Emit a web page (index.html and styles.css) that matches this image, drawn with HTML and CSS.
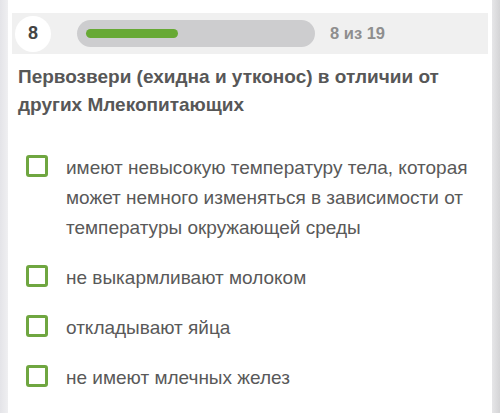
FILE: index.html
```html
<!DOCTYPE html>
<html>
  <head>
    <title>Тест</title>
    <link rel="stylesheet" href="styles.css">
  </head>
  <body>
    <div class="page">
      <div class="card">
        <div class="progress-bar">
          <div class="num">8</div>
          <div class="track"><div class="fill" style="width: 42%"></div></div>
          <div class="count">8 из 19</div>
        </div>
        <div class="question">Первозвери (ехидна и утконос) в отличии от других Млекопитающих</div>
        <ul class="answers">
          <li><span class="box"></span><span class="text">имеют невысокую температуру тела, которая может немного изменяться в зависимости от температуры окружающей среды</span></li>
          <li><span class="box"></span><span class="text">не выкармливают молоком</span></li>
          <li><span class="box"></span><span class="text">откладывают яйца</span></li>
          <li><span class="box"></span><span class="text">не имеют млечных желез</span></li>
        </ul>
      </div>
    </div>
  </body>
</html>
```

FILE: styles.css
```css
body {
  margin: 0;
  padding: 0;
  background: #fff;
  font-family: "Liberation Sans", Arial, sans-serif;
}
.page {
  height: 413px;
  display: flex;
  background: linear-gradient(to right, #e4e4e8, #efeff1 8px, transparent 8px),
              linear-gradient(to left, #d4d4d6, #e6e6e8 8px, transparent 8px);
  padding: 0 8px 0 8px;
}
.card {
  flex: 1;
  background: #fff;
  padding: 13px 4px 0 4px;
}
.progress-bar {
  display: flex;
  align-items: center;
  height: 41px;
  background: #f0f0f0;
}
.num {
  width: 36px;
  height: 36px;
  margin-left: 3px;
  border-radius: 50%;
  background: #fff;
  display: flex;
  align-items: center;
  justify-content: center;
  font-weight: bold;
  font-size: 18px;
  color: #444;
}
.track {
  width: 220px;
  height: 27px;
  margin-left: 26px;
  padding: 0 9px;
  border-radius: 14px;
  background: #cdcdcf;
  display: flex;
  align-items: center;
}
.fill {
  height: 9px;
  border-radius: 5px;
  background: #67a934;
}
.count {
  margin-left: 15px;
  font-size: 16.5px;
  font-weight: bold;
  color: #8e8e8e;
}
.question {
  margin: 9px 0 0 6px;
  font-size: 19px;
  font-weight: bold;
  line-height: 28px;
  color: #575757;
  padding-right: 20px;
}
.answers {
  list-style: none;
  margin: 34px 0 0 0;
  padding: 0;
}
.answers li {
  display: flex;
  align-items: flex-start;
  margin-bottom: 20px;
}
.box {
  flex: none;
  width: 16px;
  height: 16px;
  margin: 2px 0 0 14px;
  border: 3px solid #6fa640;
  border-radius: 3px;
}
.text {
  margin-left: 18px;
  font-size: 19px;
  line-height: 30px;
  color: #595959;
}
```
